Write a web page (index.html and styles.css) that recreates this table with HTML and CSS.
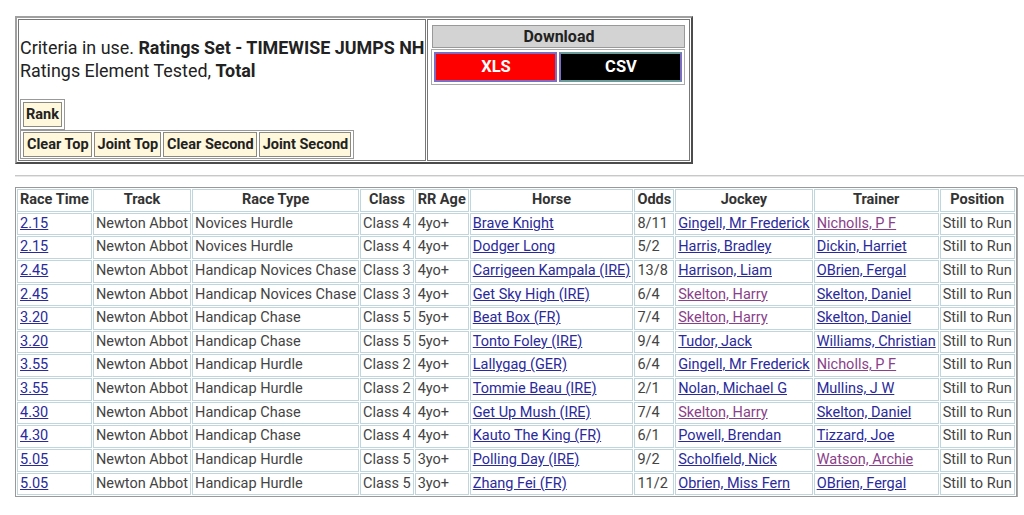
FILE: index.html
```html
<!DOCTYPE html>
<html>
<head>
<meta charset="utf-8">
<link rel="stylesheet" href="styles.css">
</head>
<body>
<table class="top">
  <tr>
    <td class="crit">
      <div class="crit-text">Criteria in use. <b>Ratings Set - TIMEWISE JUMPS NH</b><br>Ratings Element Tested, <b>Total</b></div>
      <table class="btns rank"><tr><td>Rank</td></tr></table>
      <table class="btns row"><tr><td>Clear Top</td><td>Joint Top</td><td>Clear Second</td><td>Joint Second</td></tr></table>
    </td>
    <td class="dl">
      <div class="dl-head">Download</div>
      <table class="dl-btns"><tr><td class="xls">XLS</td><td class="csv">CSV</td></tr></table>
    </td>
  </tr>
</table>
<hr class="sep">
<table class="races">
  <tr>
    <th>Race Time</th><th>Track</th><th>Race Type</th><th>Class</th><th>RR Age</th><th>Horse</th><th>Odds</th><th>Jockey</th><th>Trainer</th><th>Position</th>
  </tr>
  <tr><td><a href="#">2.15</a></td><td>Newton Abbot</td><td>Novices Hurdle</td><td>Class 4</td><td>4yo+</td><td><a href="#">Brave Knight</a></td><td>8/11</td><td><a href="#">Gingell, Mr Frederick</a></td><td><a class="v" href="#">Nicholls, P F</a></td><td>Still to Run</td></tr>
  <tr><td><a href="#">2.15</a></td><td>Newton Abbot</td><td>Novices Hurdle</td><td>Class 4</td><td>4yo+</td><td><a href="#">Dodger Long</a></td><td>5/2</td><td><a href="#">Harris, Bradley</a></td><td><a href="#">Dickin, Harriet</a></td><td>Still to Run</td></tr>
  <tr><td><a href="#">2.45</a></td><td>Newton Abbot</td><td>Handicap Novices Chase</td><td>Class 3</td><td>4yo+</td><td><a href="#">Carrigeen Kampala (IRE)</a></td><td>13/8</td><td><a href="#">Harrison, Liam</a></td><td><a href="#">OBrien, Fergal</a></td><td>Still to Run</td></tr>
  <tr><td><a href="#">2.45</a></td><td>Newton Abbot</td><td>Handicap Novices Chase</td><td>Class 3</td><td>4yo+</td><td><a href="#">Get Sky High (IRE)</a></td><td>6/4</td><td><a class="v" href="#">Skelton, Harry</a></td><td><a href="#">Skelton, Daniel</a></td><td>Still to Run</td></tr>
  <tr><td><a href="#">3.20</a></td><td>Newton Abbot</td><td>Handicap Chase</td><td>Class 5</td><td>5yo+</td><td><a href="#">Beat Box (FR)</a></td><td>7/4</td><td><a class="v" href="#">Skelton, Harry</a></td><td><a href="#">Skelton, Daniel</a></td><td>Still to Run</td></tr>
  <tr><td><a href="#">3.20</a></td><td>Newton Abbot</td><td>Handicap Chase</td><td>Class 5</td><td>5yo+</td><td><a href="#">Tonto Foley (IRE)</a></td><td>9/4</td><td><a href="#">Tudor, Jack</a></td><td><a href="#">Williams, Christian</a></td><td>Still to Run</td></tr>
  <tr><td><a href="#">3.55</a></td><td>Newton Abbot</td><td>Handicap Hurdle</td><td>Class 2</td><td>4yo+</td><td><a href="#">Lallygag (GER)</a></td><td>6/4</td><td><a href="#">Gingell, Mr Frederick</a></td><td><a class="v" href="#">Nicholls, P F</a></td><td>Still to Run</td></tr>
  <tr><td><a href="#">3.55</a></td><td>Newton Abbot</td><td>Handicap Hurdle</td><td>Class 2</td><td>4yo+</td><td><a href="#">Tommie Beau (IRE)</a></td><td>2/1</td><td><a href="#">Nolan, Michael G</a></td><td><a href="#">Mullins, J W</a></td><td>Still to Run</td></tr>
  <tr><td><a href="#">4.30</a></td><td>Newton Abbot</td><td>Handicap Chase</td><td>Class 4</td><td>4yo+</td><td><a href="#">Get Up Mush (IRE)</a></td><td>7/4</td><td><a class="v" href="#">Skelton, Harry</a></td><td><a href="#">Skelton, Daniel</a></td><td>Still to Run</td></tr>
  <tr><td><a href="#">4.30</a></td><td>Newton Abbot</td><td>Handicap Chase</td><td>Class 4</td><td>4yo+</td><td><a href="#">Kauto The King (FR)</a></td><td>6/1</td><td><a href="#">Powell, Brendan</a></td><td><a href="#">Tizzard, Joe</a></td><td>Still to Run</td></tr>
  <tr><td><a href="#">5.05</a></td><td>Newton Abbot</td><td>Handicap Hurdle</td><td>Class 5</td><td>3yo+</td><td><a href="#">Polling Day (IRE)</a></td><td>9/2</td><td><a href="#">Scholfield, Nick</a></td><td><a class="v" href="#">Watson, Archie</a></td><td>Still to Run</td></tr>
  <tr><td><a href="#">5.05</a></td><td>Newton Abbot</td><td>Handicap Hurdle</td><td>Class 5</td><td>3yo+</td><td><a href="#">Zhang Fei (FR)</a></td><td>11/2</td><td><a href="#">Obrien, Miss Fern</a></td><td><a href="#">OBrien, Fergal</a></td><td>Still to Run</td></tr>
</table>
</body>
</html>
```

FILE: styles.css
```css
html, body {
  margin: 0;
  padding: 0;
  background: #fff;
}
body {
  font-family: Roboto, "Liberation Sans", Arial, sans-serif;
  color: #222;
  padding: 16px 0 0 15px;
}
table {
  border-collapse: separate;
}
.top {
  border: 2px outset #a0a0a0;
  border-spacing: 1px;
}
.top > tbody > tr > td {
  border: 1px solid #777;
  vertical-align: top;
  padding: 0;
}
.crit {
  height: 140px;
  padding: 0 1px 0 1px !important;
}
.crit-text {
  font-size: 17.9px;
  line-height: 23px;
  margin: 16px 0 0 0;
  white-space: nowrap;
}
.btns {
  border: 1px solid #999;
  border-spacing: 2px 1px;
  font-size: 14.5px;
  font-weight: bold;
}
.btns td {
  background: #fff8dc;
  border: 1px solid #8a8a80;
  padding: 0 2px;
  line-height: 23px;
  white-space: nowrap;
}
.rank {
  margin-top: 17px;
  border-spacing: 2px;
}
.row {
  margin-top: 0;
  border-spacing: 2px 1px;
}
.row td {
  padding: 0 2px 0 3px;
}
.dl {
  width: 254px;
  padding: 3px 4px 3px 3px !important;
}
.dl-head {
  background: #d3d3d3;
  border: 1px solid #999;
  margin: 2px 0 0 1px;
  text-align: center;
  font-weight: bold;
  font-size: 16px;
  line-height: 21px;
}
.dl-btns {
  width: 100%;
  border: 1px solid #aaa;
  border-spacing: 2px;
  margin-top: 1px;
}
.dl-btns td {
  text-align: center;
  color: #fff;
  font-weight: bold;
  font-size: 16.5px;
  line-height: 26px;
  border: 2px solid #7b6cc4;
  border-top-color: #6a9a9a;
  border-bottom-color: #6a9a9a;
  width: 50%;
  padding: 0;
}
.xls { background: #ff0000; border-top-color: #7b6cc4 !important; border-bottom-color: #7b6cc4 !important; }
.csv { background: #000; }
.sep {
  margin: 11px 0 10px 0;
  border: 0;
  border-top: 1px solid #c8c8c8;
  border-bottom: 1px solid #e8e8e8;
  height: 0;
}
.races {
  border: 1px solid #999;
  box-shadow: 1px 1px 0 #aaa;
  border-spacing: 1px;
  font-size: 14.5px;
  color: #444;
}
.races th, .races td {
  border: 1px solid #bfd6de;
  padding: 1px 2px;
  line-height: 18.64px;
  white-space: nowrap;
  text-align: left;
}
.races th {
  text-align: center;
  color: #333;
}
.races a {
  color: #2a2a9c;
}
.races a.v {
  color: #8a3f8a;
}
```
